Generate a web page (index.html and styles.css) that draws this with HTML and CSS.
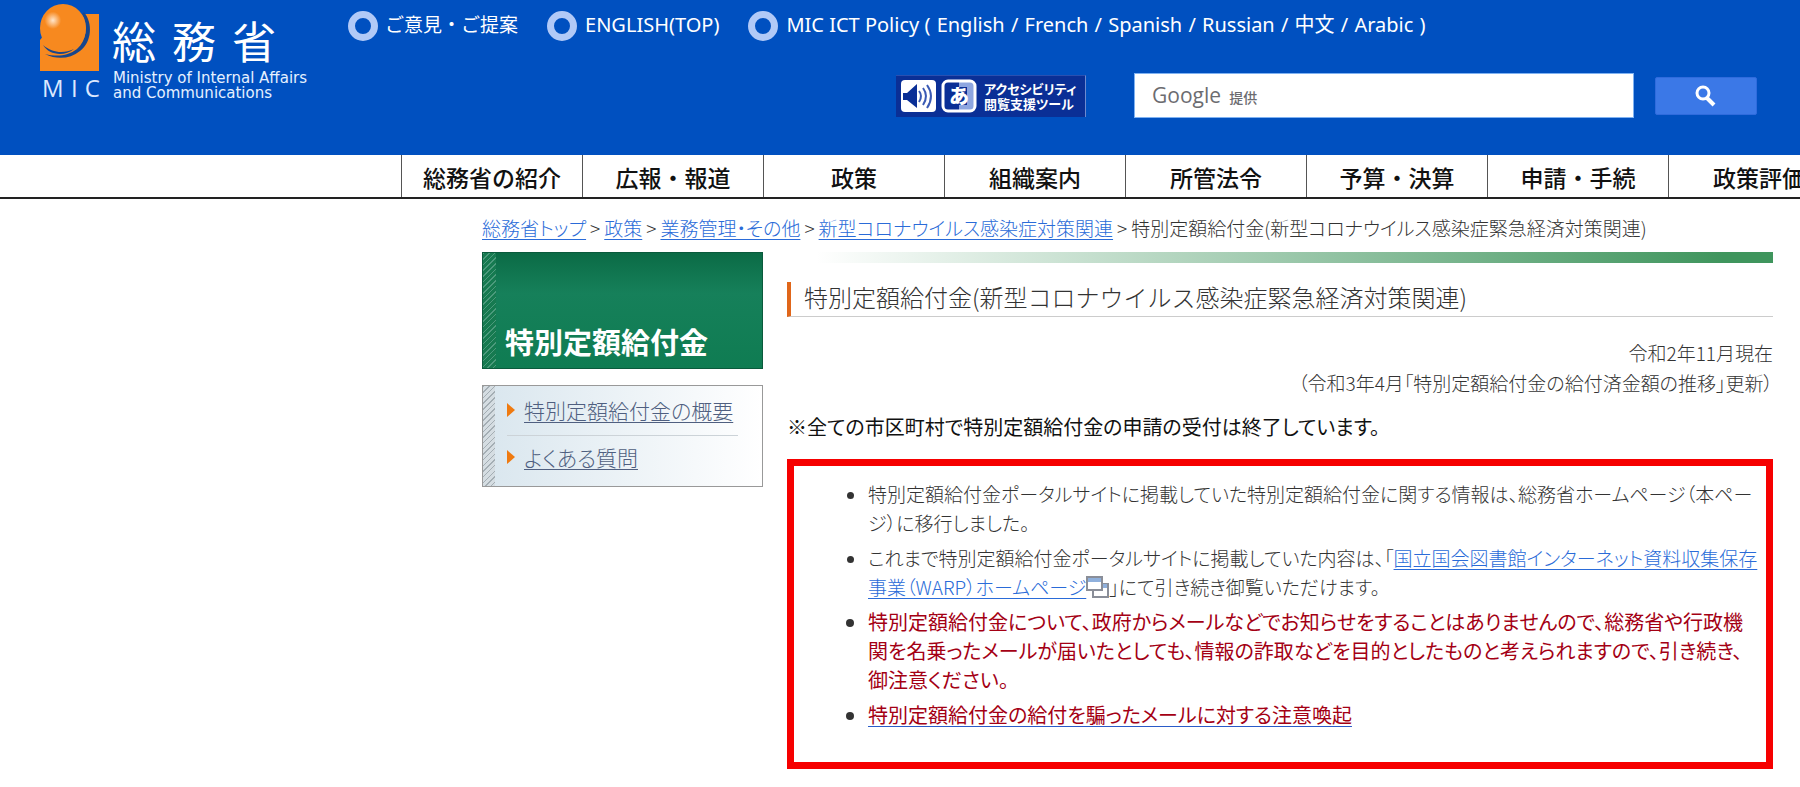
FILE: index.html
```html
<!DOCTYPE html>
<html lang="ja">
<head>
<meta charset="utf-8">
<title>総務省｜特別定額給付金(新型コロナウイルス感染症緊急経済対策関連)</title>
<link rel="stylesheet" href="styles.css">
</head>
<body>
<header class="header">
  <a class="logo" href="#">
    <span class="logo-mark">
      <svg width="60" height="70" viewBox="0 0 60 70" aria-hidden="true">
        <defs>
          <radialGradient id="ball" cx="0.28" cy="0.34" r="0.18">
            <stop offset="0" stop-color="#ffe6cc"/>
            <stop offset="1" stop-color="#f7891f"/>
          </radialGradient>
        </defs>
        <path d="M44 10H59V67H0V36L10 24H40Z" fill="#f7891f"/>
        <path d="M44 8C53 19 52 38 40 47C30 55 17 56 5 50C17 53 28 52 37 45C47 36 48 22 42 10Z" fill="#17468c"/>
        <ellipse cx="23" cy="24" rx="23" ry="24" fill="url(#ball)"/>
        <path d="M3 41C12 49 24 50 34 45C24 53 9 51 3 41Z" fill="#17468c"/>
      </svg>
      <span class="logo-abbr"><span>M</span><span>I</span><span>C</span></span>
    </span>
    <span class="logo-text">
      <span class="logo-name"><span>総</span><span>務</span><span>省</span></span>
      <span class="logo-en">Ministry of Internal Affairs<br>and Communications</span>
    </span>
  </a>
  <div class="header-main">
    <ul class="top-links">
      <li><i class="ring"></i><a href="#">ご意見・ご提案</a></li>
      <li class="latin"><i class="ring"></i><a href="#">ENGLISH(TOP)</a></li>
      <li class="latin"><i class="ring"></i><span>MIC ICT Policy ( <a href="#">English</a> / <a href="#">French</a> / <a href="#">Spanish</a> / <a href="#">Russian</a> / <a href="#">中文</a> / <a href="#">Arabic</a> )</span></li>
    </ul>
    <form class="tools">
      <a class="access" href="#">
        <svg width="76" height="34" viewBox="0 0 76 34" aria-hidden="true">
          <rect x="0" y="1" width="35" height="32" rx="4" fill="#fff"/>
          <path d="M2 14H6L16 5V29L6 21H2Z" fill="#0a2f96"/>
          <path d="M18 12Q22 17 18 23M22 9Q28 17 22 26M26 6Q34 17 26 29" fill="none" stroke="#3a5ab4" stroke-width="2"/>
          <rect x="42" y="2" width="32" height="30" rx="5" fill="#0a2f96"/>
          <path d="M58 2H69Q74 2 74 7V27Q74 32 69 32H58V26H66V8H58Z" fill="#8ea6e0"/>
          <rect x="42" y="2" width="32" height="30" rx="5" fill="none" stroke="#fff" stroke-width="3"/>
          <text x="58" y="25" text-anchor="middle" class="access-kana">あ</text>
        </svg>
        <span class="access-text"><span>アクセシビリティ</span><span>閲覧支援ツール</span></span>
      </a>
      <div class="search">
        <input id="q" class="search-input" type="text">
        <label class="search-brand" for="q"><b>Google</b> 提供</label>
      </div>
      <button class="search-button" type="button" aria-label="検索">
        <svg width="22" height="22" viewBox="0 0 22 22" aria-hidden="true">
          <ellipse cx="8" cy="8" rx="6" ry="6" fill="none" stroke="#fff" stroke-width="3"/>
          <path d="M12 13L19 20" stroke="#fff" stroke-width="4"/>
        </svg>
      </button>
    </form>
  </div>
</header>
<nav class="global-nav">
  <a href="#">総務省の紹介</a>
  <a href="#">広報・報道</a>
  <a href="#">政策</a>
  <a href="#">組織案内</a>
  <a href="#">所管法令</a>
  <a href="#">予算・決算</a>
  <a href="#">申請・手続</a>
  <a href="#">政策評価</a>
</nav>
<div class="page">
  <div class="crumbs"><a href="#">総務省トップ</a><span>&gt;</span><a href="#">政策</a><span>&gt;</span><a href="#">業務管理・その他</a><span>&gt;</span><a href="#">新型コロナウイルス感染症対策関連</a><span>&gt;</span>特別定額給付金(新型コロナウイルス感染症緊急経済対策関連)</div>
  <div class="columns">
    <aside class="side">
      <div class="side-title">特別定額給付金</div>
      <ul class="side-nav">
        <li><a href="#">特別定額給付金の概要</a></li>
        <li><a href="#">よくある質問</a></li>
      </ul>
    </aside>
    <main class="content">
      <div class="stripe"></div>
      <h1>特別定額給付金(新型コロナウイルス感染症緊急経済対策関連)</h1>
      <p class="date">令和2年11月現在<br>（令和3年4月「特別定額給付金の給付済金額の推移」更新）</p>
      <p class="closed">※全ての市区町村で特別定額給付金の申請の受付は終了しています。</p>
      <ul class="notice">
        <li>特別定額給付金ポータルサイトに掲載していた特別定額給付金に関する情報は、総務省ホームページ（本ペー<br>ジ）に移行しました。</li>
        <li>これまで特別定額給付金ポータルサイトに掲載していた内容は、「<a href="#">国立国会図書館インターネット資料収集保存<br>事業（WARP）ホームページ</a><svg class="window-icon" width="23" height="22" viewBox="0 0 23 22" aria-hidden="true"><rect x="7" y="8" width="15" height="13" fill="#fff" stroke="#8a8e98" stroke-width="2"/><rect x="8" y="8" width="13" height="4" fill="#8fb0dc"/><rect x="1" y="1" width="15" height="13" fill="#fff" stroke="#8a8e98" stroke-width="2"/><rect x="2" y="2" width="13" height="4" fill="#8fb0dc"/></svg>」にて引き続き御覧いただけます。</li>
        <li class="alert">特別定額給付金について、政府からメールなどでお知らせをすることはありませんので、総務省や行政機<br>関を名乗ったメールが届いたとしても、情報の詐取などを目的としたものと考えられますので、引き続き、<br>御注意ください。</li>
        <li class="alert"><a href="#">特別定額給付金の給付を騙ったメールに対する注意喚起</a></li>
      </ul>
    </main>
  </div>
</div>
</body>
</html>
```
FILE: styles.css
```css
* { box-sizing: border-box; }
body {
  margin: 0;
  background: #fff;
  color: #333;
  font-family: "Noto Sans CJK JP", sans-serif;
  font-size: 19px;
  overflow-x: hidden;
}
ul, p, h1 { margin: 0; padding: 0; }
ul { list-style: none; }

.header {
  display: flex;
  height: 155px;
  background: #0050c0;
  color: #fff;
}
.header a { color: inherit; text-decoration: none; }

.logo { display: flex; gap: 12px; flex: 0 0 348px; padding: 4px 0 0 40px; }
.logo-mark { display: flex; flex-direction: column; width: 60px; }
.logo-abbr {
  display: flex;
  justify-content: space-between;
  padding-left: 2px;
  font: 24px/28px "Open Sans", sans-serif;
  color: #dbe8ff;
}
.logo-text { display: flex; flex-direction: column; white-space: nowrap; }
.logo-name {
  display: flex;
  gap: 16px;
  font-size: 44px;
  line-height: 60px;
  padding-top: 6px;
}
.logo-en {
  padding: 1px 0 0 1px;
  font: 15px/15px "DejaVu Sans", sans-serif;
  color: #e6f0ff;
}

.header-main { display: flex; flex: 1; flex-direction: column; min-width: 0; }
.top-links {
  display: flex;
  gap: 29px;
  padding-top: 11px;
  font-family: "Noto Sans", "Noto Sans CJK JP", sans-serif;
  line-height: 28px;
  white-space: nowrap;
}
.top-links li { display: flex; gap: 7px; }
.top-links .latin { gap: 8px; font-size: 20px; }
.top-links span a { padding: 0 1px; }
.ring {
  width: 30px;
  height: 30px;
  border: 7px solid #b1c9f7;
  border-radius: 50%;
}
.tools {
  display: flex;
  align-items: center;
  justify-content: flex-end;
  margin-top: 32px;
  padding-right: 43px;
}
.access {
  display: flex;
  align-items: center;
  gap: 7px;
  width: 190px;
  height: 42px;
  margin-right: 48px;
  padding-left: 5px;
  background: #0a2f96;
  border-right: 1px solid #6d8ad0;
  border-top: 1px solid #2a4fb0;
  font-size: 13px;
  font-weight: 700;
  line-height: 15px;
  font-feature-settings: "palt";
  white-space: nowrap;
}
.access-text { display: flex; flex-direction: column; }
.access-kana { font: 900 20px "Noto Sans CJK JP", sans-serif; fill: #fff; }
.search { position: relative; width: 500px; }
.search-input {
  display: block;
  width: 100%;
  height: 45px;
  padding: 0 18px;
  background: #fff;
  border: 1px solid #7fb2f2;
}
.search-brand {
  position: absolute;
  left: 18px;
  top: 8px;
  font-size: 14px;
  font-weight: 500;
  line-height: 28px;
  color: #6c6c70;
  pointer-events: none;
}
.search-brand b { margin-right: 5px; font: 500 21px/28px "Open Sans", sans-serif; }
.search-button {
  display: flex;
  align-items: center;
  justify-content: center;
  width: 102px;
  height: 38px;
  margin-left: 21px;
  padding: 0;
  background: #3b78e7;
  border: 1px solid #2f6bdd;
  border-radius: 2px;
}

.global-nav {
  display: flex;
  height: 44px;
  padding-left: 401px;
  overflow: hidden;
  border-bottom: 2px solid #222;
}
.global-nav a {
  flex: 0 0 181px;
  border-left: 1px solid #555;
  color: #111;
  font-size: 23px;
  font-weight: 500;
  line-height: 44px;
  text-align: center;
  text-decoration: none;
}

.page { padding: 15px 27px 0 482px; font-weight: 300; }
.page a { color: #2a6bd8; text-underline-offset: 3px; text-decoration-thickness: 1px; }
.crumbs { line-height: 28px; font-feature-settings: "palt"; white-space: nowrap; }
.crumbs span { margin: 0 4px; }
.columns { display: flex; gap: 24px; padding-top: 10px; }
.side { flex: 0 0 281px; }
.side-title {
  height: 117px;
  padding: 72px 0 0 22px;
  background:
    repeating-linear-gradient(135deg, #4b9a7c 0 1px, #167a50 1px 4px) 0 0 / 13px 100% no-repeat,
    linear-gradient(#0b6b46, #16805a 35%, #0f7c52);
  border: 1px solid #0a5a3c;
  color: #fff;
  font-size: 29px;
  font-weight: 700;
  line-height: 32px;
}
.side-nav {
  margin-top: 16px;
  padding: 2px 0 4px 24px;
  border: 1px solid #999;
  background:
    repeating-linear-gradient(135deg, #a4aeb4 0 1px, #d5dde2 1px 4px) 0 0 / 12px 100% no-repeat,
    linear-gradient(90deg, #d9e6ee, #fff);
}
.side-nav li { display: flex; align-items: center; gap: 9px; height: 47px; padding-bottom: 4px; }
.side-nav li + li { border-top: 1px solid #ccd3d8; margin-right: 24px; }
.side-nav li::before {
  content: "";
  border: 7px solid transparent;
  border-left: 8px solid #ef7a10;
  border-right: 0;
}
.side-nav a { color: #4f5f80; font-size: 21px; font-feature-settings: "palt"; }

.content { flex: 1; min-width: 0; }
.stripe { height: 11px; background: linear-gradient(90deg, #fff 3%, #3f955d 95%); }
h1 {
  margin-top: 19px;
  padding: 0 0 4px 13px;
  border-left: 4px solid #e0661a;
  border-bottom: 1px solid #ccc;
  font-size: 24px;
  font-weight: 300;
  line-height: 30px;
  white-space: nowrap;
}
.date { margin-top: 21px; line-height: 30px; text-align: right; font-feature-settings: "palt"; }
.closed {
  margin-top: 14px;
  color: #111;
  font-size: 20px;
  font-weight: 400;
  line-height: 30px;
  font-feature-settings: "palt";
}
.notice {
  margin-top: 17px;
  padding: 13px 0 27px 74px;
  border: 7px solid #f60000;
  list-style: disc;
  font-feature-settings: "palt";
  white-space: nowrap;
}
.notice li { line-height: 29px; margin-bottom: 6px; }
.notice .alert { color: #a40014; font-size: 20px; font-weight: 400; }
.notice .alert::marker { color: #333; }
.notice .alert a { color: inherit; text-decoration-color: #2a5bc8; }
.window-icon { vertical-align: -3px; }
```
